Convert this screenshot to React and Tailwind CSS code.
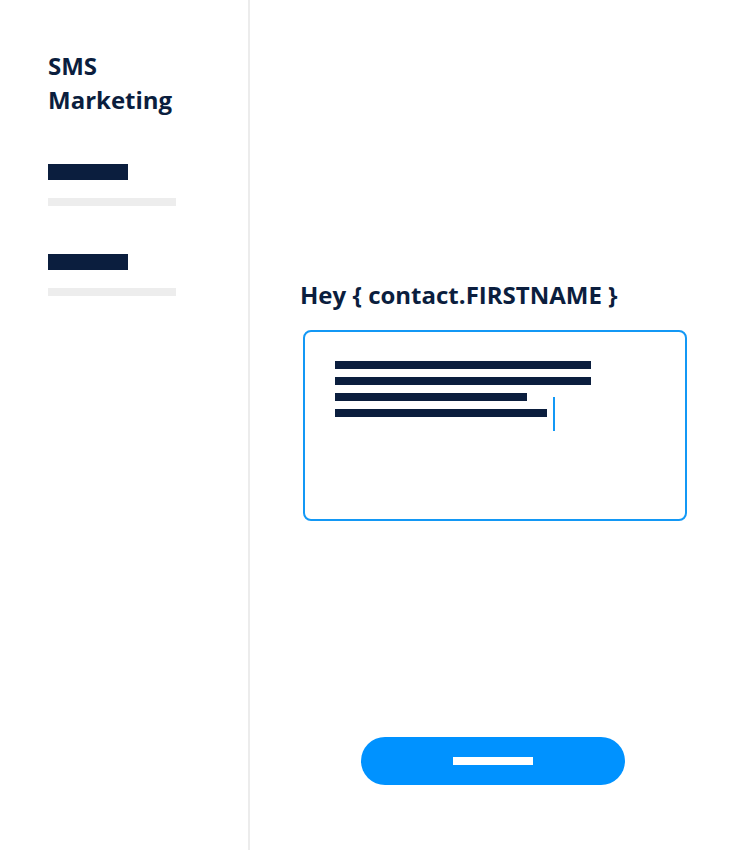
export default function App() {
  return (
    <div className="flex h-[850px] w-[746px] bg-white font-['Open_Sans',sans-serif] text-[#0b1e3e]">
      <aside className="flex w-[250px] shrink-0 flex-col border-r-2 border-[#ececec] pl-12 pt-[49px]">
        <h1 className="text-[24px] font-bold leading-[34px]">
          SMS
          <br />
          Marketing
        </h1>
        <div className="mt-[47px] flex flex-col">
          <div className="h-4 w-20 bg-[#0b1e3e]" />
          <div className="mt-[18px] h-2 w-32 bg-[#ededed]" />
        </div>
        <div className="mt-[48px] flex flex-col">
          <div className="h-4 w-20 bg-[#0b1e3e]" />
          <div className="mt-[18px] h-2 w-32 bg-[#ededed]" />
        </div>
      </aside>
      <main className="flex flex-1 flex-col pl-[50px]">
        <h2 className="mt-[278px] text-[24px] font-bold leading-[34px]">
          Hey {"{"} contact.FIRSTNAME {"}"}
        </h2>
        <div className="ml-[3px] mt-[18px] flex h-[191px] w-[384px] items-start rounded-lg border-2 border-[#1398f5] pl-[30px] pt-[29px]">
          <div className="flex flex-col gap-2">
            <div className="h-2 w-64 bg-[#0b1e3e]" />
            <div className="h-2 w-64 bg-[#0b1e3e]" />
            <div className="h-2 w-48 bg-[#0b1e3e]" />
            <div className="h-2 w-[212px] bg-[#0b1e3e]" />
          </div>
          <div className="ml-[-38px] mt-[36px] h-[34px] w-[2px] bg-[#1398f5]" />
        </div>
        <button className="ml-[61px] mt-[216px] flex h-12 w-[264px] items-center justify-center rounded-full bg-[#0092ff]">
          <span className="h-2 w-20 bg-white" />
        </button>
      </main>
    </div>
  );
}
